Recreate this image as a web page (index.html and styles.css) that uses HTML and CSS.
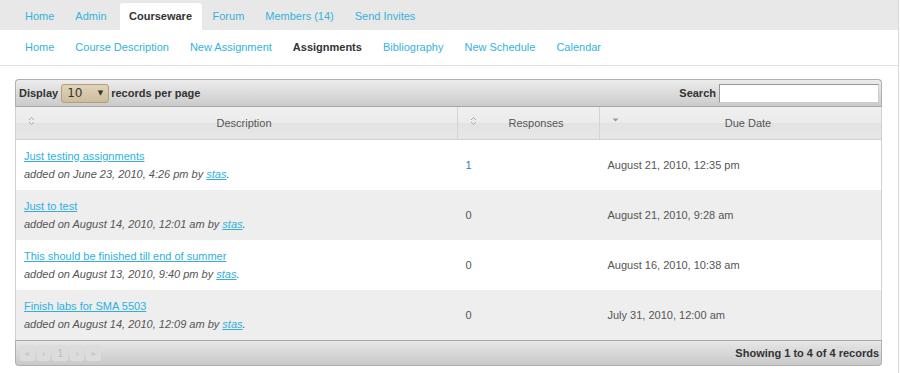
FILE: index.html
```html
<!DOCTYPE html>
<html lang="en">
<head>
    <meta charset="UTF-8">
    <title>Assignments</title>
    <link rel="stylesheet" href="styles.css">
</head>
<body>
    <div class="page">
        <ul class="tabs">
            <li><a href="#">Home</a></li>
            <li><a href="#">Admin</a></li>
            <li class="active"><a href="#">Courseware</a></li>
            <li><a href="#">Forum</a></li>
            <li><a href="#">Members (14)</a></li>
            <li><a href="#">Send Invites</a></li>
        </ul>
        <ul class="subnav">
            <li><a href="#">Home</a></li>
            <li><a href="#">Course Description</a></li>
            <li><a href="#">New Assignment</a></li>
            <li class="active"><a href="#">Assignments</a></li>
            <li><a href="#">Bibliography</a></li>
            <li><a href="#">New Schedule</a></li>
            <li><a href="#">Calendar</a></li>
        </ul>

        <div class="grid">
            <div class="toolbar">
                <div class="length">
                    Display
                    <span class="select">10 <span class="arrow">&#9660;</span></span>
                    records per page
                </div>
                <div class="search">
                    Search <input type="text">
                </div>
            </div>
            <table>
                <thead>
                    <tr>
                        <th class="col-desc">
                            <svg class="sort" width="7" height="10" viewBox="0 0 7 10"><path d="M1 4 L3.5 1.5 L6 4 M1 6 L3.5 8.5 L6 6" fill="none" stroke="#aaa" stroke-width="1"/></svg>
                            Description</th>
                        <th class="col-resp">
                            <svg class="sort" width="7" height="10" viewBox="0 0 7 10"><path d="M1 4 L3.5 1.5 L6 4 M1 6 L3.5 8.5 L6 6" fill="none" stroke="#aaa" stroke-width="1"/></svg>
                            Responses</th>
                        <th class="col-date">
                            <svg class="sort" width="7" height="10" viewBox="0 0 7 10"><path d="M0.5 2.5 L6.5 2.5 L3.5 5.5 Z" fill="#999"/></svg>
                            Due Date</th>
                    </tr>
                </thead>
                <tbody>
                    <tr>
                        <td><a href="#" class="title">Just testing assignments</a>
                            <div class="meta">added on June 23, 2010, 4:26 pm by <a href="#">stas</a>.</div></td>
                        <td class="resp"><a href="#">1</a></td>
                        <td>August 21, 2010, 12:35 pm</td>
                    </tr>
                    <tr class="alt">
                        <td><a href="#" class="title">Just to test</a>
                            <div class="meta">added on August 14, 2010, 12:01 am by <a href="#">stas</a>.</div></td>
                        <td class="resp">0</td>
                        <td>August 21, 2010, 9:28 am</td>
                    </tr>
                    <tr>
                        <td><a href="#" class="title">This should be finished till end of summer</a>
                            <div class="meta">added on August 13, 2010, 9:40 pm by <a href="#">stas</a>.</div></td>
                        <td class="resp">0</td>
                        <td>August 16, 2010, 10:38 am</td>
                    </tr>
                    <tr class="alt">
                        <td><a href="#" class="title">Finish labs for SMA 5503</a>
                            <div class="meta">added on August 14, 2010, 12:09 am by <a href="#">stas</a>.</div></td>
                        <td class="resp">0</td>
                        <td>July 31, 2010, 12:00 am</td>
                    </tr>
                </tbody>
            </table>
            <div class="footer">
                <div class="pager">
                    <span>&laquo;</span><span>&lsaquo;</span><span class="num">1</span><span>&rsaquo;</span><span>&raquo;</span>
                </div>
                <div class="info">Showing 1 to 4 of 4 records</div>
            </div>
        </div>
    </div>
</body>
</html>
```
FILE: styles.css
```css
body {
    margin: 0;
    font-family: "Liberation Sans", Arial, sans-serif;
    font-size: 11px;
    color: #555;
    background: #fff;
}
a {
    color: #2fb0dc;
}
.page {
    width: 898px;
    height: 373px;
    border-right: 1px solid #d8d8d8;
}
.tabs {
    list-style: none;
    margin: 0;
    padding: 3px 0 0 14.5px;
    height: 27px;
    background: #e8e8e8;
    display: flex;
}
.tabs li {
    padding: 0 10.5px;
    line-height: 27px;
    border-radius: 3px 3px 0 0;
}
.tabs li a,
.subnav li a {
    text-decoration: none;
    color: #35b2dc;
}
.tabs li.active {
    background: #fff;
    padding: 0 10px 0 9px;
    margin: 0 0 0 3px;
}
.tabs li.active a,
.subnav li.active a {
    color: #333;
    font-weight: bold;
}
.subnav {
    list-style: none;
    margin: 0;
    padding: 0 0 0 14.5px;
    height: 35px;
    line-height: 35px;
    display: flex;
    border-bottom: 1px solid #e2e2e2;
}
.subnav li {
    padding: 0 10.5px;
}
.grid {
    margin: 13px 0 0 15px;
    width: 867px;
}
.toolbar {
    display: flex;
    justify-content: space-between;
    align-items: center;
    height: 26px;
    padding: 0 2px 0 3px;
    border: 1px solid #b0b0b0;
    border-bottom: 1px solid #a8a8a8;
    border-radius: 4px 4px 0 0;
    background: linear-gradient(#ececec, #cbcbcb);
    font-weight: bold;
    color: #333;
}
.length,
.search {
    display: flex;
    align-items: center;
}
.select {
    display: inline-flex;
    align-items: center;
    justify-content: space-between;
    width: 36px;
    height: 17px;
    margin: 0 2px 0 3px;
    padding: 0 5px;
    border: 1px solid #b19f7d;
    border-radius: 3px;
    background: linear-gradient(#e0d3b9, #cdbd9c);
    font-family: "DejaVu Sans", sans-serif;
    font-weight: normal;
    font-size: 12px;
    color: #333;
}
.select .arrow {
    font-size: 7px;
}
.search input {
    width: 158px;
    height: 17px;
    margin-left: 3px;
    padding: 0;
    border: 1px solid #999;
    border-right-color: #ccc;
    border-bottom-color: #ccc;
    background: #fff;
}
table {
    width: 100%;
    border-collapse: collapse;
    border-left: 1px solid #d0d0d0;
    border-right: 1px solid #d0d0d0;
    font-size: 11px;
}
th {
    height: 32px;
    padding: 0 0 0 15px;
    font-weight: normal;
    color: #555;
    text-align: center;
    position: relative;
    background: linear-gradient(#efefef 0%, #ebebeb 50%, #e3e3e3 51%, #e6e6e6 100%);
    border-left: 1px solid #d4d4d4;
    border-bottom: 1px solid #d0d0d0;
}
th:first-child {
    border-left: none;
}
.col-desc { width: 426px; }
.col-resp { width: 126px; }
.sort {
    position: absolute;
    left: 12px;
    top: 9px;
}
td {
    height: 50px;
    padding: 0 8px;
    vertical-align: middle;
    color: #555;
}
tr.alt td {
    background: #eeeeee;
}
td .title {
    display: block;
}
.meta {
    margin-top: 6px;
    font-style: italic;
    color: #555;
}
.resp a {
    text-decoration: none;
    color: #2f7fb8;
}
.footer {
    display: flex;
    justify-content: space-between;
    align-items: center;
    height: 24px;
    padding: 0 2px 0 4px;
    border: 1px solid #b0b0b0;
    border-top: 1px solid #a8a8a8;
    border-radius: 0 0 4px 4px;
    background: linear-gradient(#e6e6e6, #c9c9c9);
    font-size: 11px;
}
.pager {
    display: flex;
    gap: 2px;
}
.pager span {
    padding: 0 5px;
    height: 16px;
    line-height: 16px;
    border-radius: 2px;
    background: #dcdcdc;
    color: #bdbdbd;
    font-family: "Liberation Serif", serif;
    font-size: 10px;
}
.pager span.num {
    font-family: "Liberation Sans", sans-serif;
    font-size: 11px;
}
.info {
    font-weight: bold;
    color: #333;
}
```
